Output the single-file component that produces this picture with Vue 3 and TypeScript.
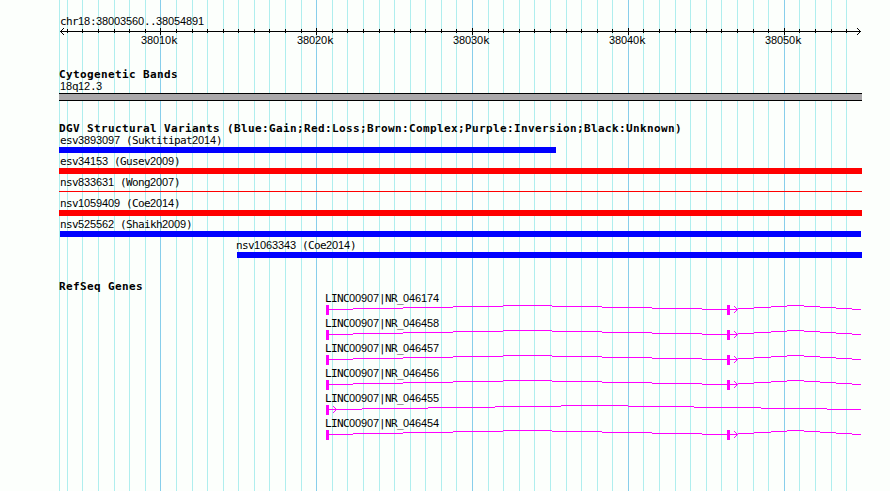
<script setup lang="ts">
import { computed } from 'vue'

interface Variant { label: string; start: number; end: number; color: string; thin?: boolean }
interface Gene { label: string; exons: number[]; arrow: number; path: string }

const X0 = 59
const WIDTH = 803

const minor = [
  59, 67, 82, 98, 114, 129, 145, 176, 192, 207, 223, 238, 254, 269, 285, 301, 332, 347, 363, 379,
  394, 410, 425, 441, 456, 488, 503, 519, 534, 550, 566, 581, 597, 612, 643, 659, 675, 690, 706,
  721, 737, 753, 768, 799, 815, 831, 846,
]
const major = [160, 316, 472, 628, 784]
const minorTicks = minor.filter((x) => x > X0)

const ticks = ['38010k', '38020k', '38030k', '38040k', '38050k']

const variants: Variant[] = [
  { label: 'esv3893097 (Suktitipat2014)', start: 59, end: 556, color: '#0000ff' },
  { label: 'esv34153 (Gusev2009)', start: 59, end: 862, color: '#ff0000' },
  { label: 'nsv833631 (Wong2007)', start: 59, end: 862, color: '#ff0000', thin: true },
  { label: 'nsv1059409 (Coe2014)', start: 59, end: 862, color: '#ff0000' },
  { label: 'nsv525562 (Shaikh2009)', start: 60, end: 861, color: '#0000ff' },
  { label: 'nsv1063343 (Coe2014)', start: 237, end: 862, color: '#0000ff' },
]

// Intron hats are drawn as one-pixel stairs: [from, to, y]
const stairs = (steps: number[][]) => steps.map(([a, b, y]) => `M${a} ${y}h${b - a}v1H${a}z`).join('')

const spliced = stairs([
  [329, 353, 4], [353, 403, 3], [403, 453, 2], [453, 503, 1], [503, 552, 0], [552, 602, 1],
  [602, 652, 2], [652, 702, 3], [702, 727, 4], [730, 738, 4], [738, 754, 3], [754, 771, 2],
  [771, 787, 1], [787, 804, 0], [804, 820, 1], [820, 836, 2], [836, 852, 3], [852, 861, 4],
])
const single = stairs([
  [329, 362, 4], [362, 428, 3], [428, 495, 2], [495, 561, 1], [561, 628, 0], [628, 694, 1],
  [694, 761, 2], [761, 827, 3], [827, 861, 4],
])

const genes = computed<Gene[]>(() =>
  ['046174', '046458', '046457', '046456', '046455', '046454'].map((id) => {
    const one = id === '046455'
    return {
      label: `LINC00907|NR_${id}`,
      exons: one ? [326] : [326, 727],
      arrow: one ? 333 : 734,
      path: one ? single : spliced,
    }
  }),
)

const runs = (text: string) =>
  text.split(/(\d+)/).filter(Boolean).map((t) => ({ t, digits: /^\d/.test(t) }))
</script>

<template>
  <main class="browser">
    <svg class="grid" width="890" height="491" shape-rendering="crispEdges">
      <rect v-for="x in minor" :key="x" :x="x" y="0" width="1" height="491" fill="#afeeee" />
      <rect v-for="x in major" :key="x" :x="x" y="0" width="1" height="491" fill="#87ceeb" />
    </svg>

    <header class="ruler">
      <div class="label region">
        <span v-for="(r, i) in runs('chr18:38003560..38054891')" :key="i" :class="{ num: r.digits }">{{ r.t }}</span>
      </div>
      <svg class="axis" width="890" height="7" shape-rendering="crispEdges">
        <rect x="60" y="3" width="801" height="1" />
        <rect v-for="x in minorTicks" :key="x" :x="x" y="1" width="1" height="4" />
        <rect v-for="x in major" :key="x" :x="x" y="0" width="1" height="7" />
        <path d="M61 2h1v1h-1zM62 1h1v1h-1zM63 0h1v1h-1zM61 4h1v1h-1zM62 5h1v1h-1zM63 6h1v1h-1z" />
        <path d="M859 2h1v1h-1zM858 1h1v1h-1zM857 0h1v1h-1zM859 4h1v1h-1zM858 5h1v1h-1zM857 6h1v1h-1z" />
      </svg>
      <div class="tick-labels">
        <span v-for="t in ticks" :key="t" class="label"><span class="num">{{ t.slice(0, 5) }}</span>k</span>
      </div>
    </header>

    <section class="cyto">
      <h2>Cytogenetic Bands</h2>
      <div class="label inset"><span class="num">18</span>q<span class="num">12</span>.<span class="num">3</span></div>
      <div class="band"></div>
    </section>

    <section class="variants">
      <h2>DGV Structural Variants (Blue:Gain;Red:Loss;Brown:Complex;Purple:Inversion;Black:Unknown)</h2>
      <div
        v-for="v in variants"
        :key="v.label"
        class="variant"
        :style="{ marginLeft: v.start - X0 + 'px', width: v.end - v.start + 'px' }"
      >
        <div class="label" :class="{ inset: v.start === X0, outset: v.start > 60 }">
          <span v-for="(r, i) in runs(v.label)" :key="i" :class="{ num: r.digits }">{{ r.t }}</span>
        </div>
        <div class="bar" :class="{ thin: v.thin }" :style="{ backgroundColor: v.color }"></div>
      </div>
    </section>

    <section class="genes">
      <h2>RefSeq Genes</h2>
      <div v-for="g in genes" :key="g.label" class="gene">
        <div class="label">
          <span v-for="(r, i) in runs(g.label)" :key="i" :class="{ num: r.digits }">{{ r.t }}</span>
        </div>
        <svg :width="WIDTH" height="10" :viewBox="`${X0} 0 ${WIDTH} 10`" fill="#ff00ff" shape-rendering="crispEdges">
          <path :d="g.path" />
          <rect v-for="x in g.exons" :key="x" :x="x" y="0" width="3" height="10" />
          <path :transform="`translate(${g.arrow} 0)`" d="M0 1h1v1h-1zM1 2h1v1h-1zM2 3h1v1h-1zM3 4h1v1h-1zM2 5h1v1h-1zM1 6h1v1h-1zM0 7h1v1h-1z" />
        </svg>
      </div>
    </section>
  </main>
</template>

<style>
body {
  margin: 0;
  background: #fcfffc;
}
</style>

<style scoped>
.browser {
  position: relative;
  box-sizing: border-box;
  width: 890px;
  height: 491px;
  padding-top: 15px;
  overflow: hidden;
  background: #fcfffc;
  color: #000;
}
.grid {
  position: absolute;
  inset: 0;
}
svg {
  display: block;
}
.ruler,
section {
  position: relative;
}
.label {
  height: 12px;
  font: 11px/12px 'DejaVu Sans Mono', monospace;
  letter-spacing: -0.622px;
  white-space: pre;
}
.num {
  font-family: 'Liberation Sans', sans-serif;
  letter-spacing: -0.118px;
}
h2 {
  box-sizing: border-box;
  height: 12px;
  margin: 0;
  padding-top: 1px;
  font: bold 11px/12px 'DejaVu Sans Mono', monospace;
  letter-spacing: 0.378px;
  white-space: pre;
}
.ruler {
  height: 53px;
}
.region {
  height: 13px;
  padding-left: 1px;
  margin-left: 59px;
}
.tick-labels {
  display: flex;
  gap: 120px;
  padding-left: 141px;
  margin-top: -1px;
}
.tick-labels .label {
  width: 36px;
}
section {
  width: 803px;
  margin-left: 59px;
}
.cyto {
  height: 54px;
}
.band {
  box-sizing: border-box;
  height: 8px;
  margin-top: 1px;
  background: #aaa8aa;
  border-top: 1px solid #000;
  border-bottom: 1px solid #000;
}
.variants {
  height: 158px;
}
.variant {
  height: 21px;
}
.variant .label {
  height: 13px;
}
.variant .inset,
.cyto .inset {
  padding-left: 1px;
}
.variant .outset {
  margin-left: -1px;
}
.bar {
  height: 6px;
}
.bar.thin {
  height: 1px;
  margin-top: 2px;
}
.gene {
  height: 25px;
}
.gene .label {
  height: 13px;
  padding-left: 266px;
}
</style>
